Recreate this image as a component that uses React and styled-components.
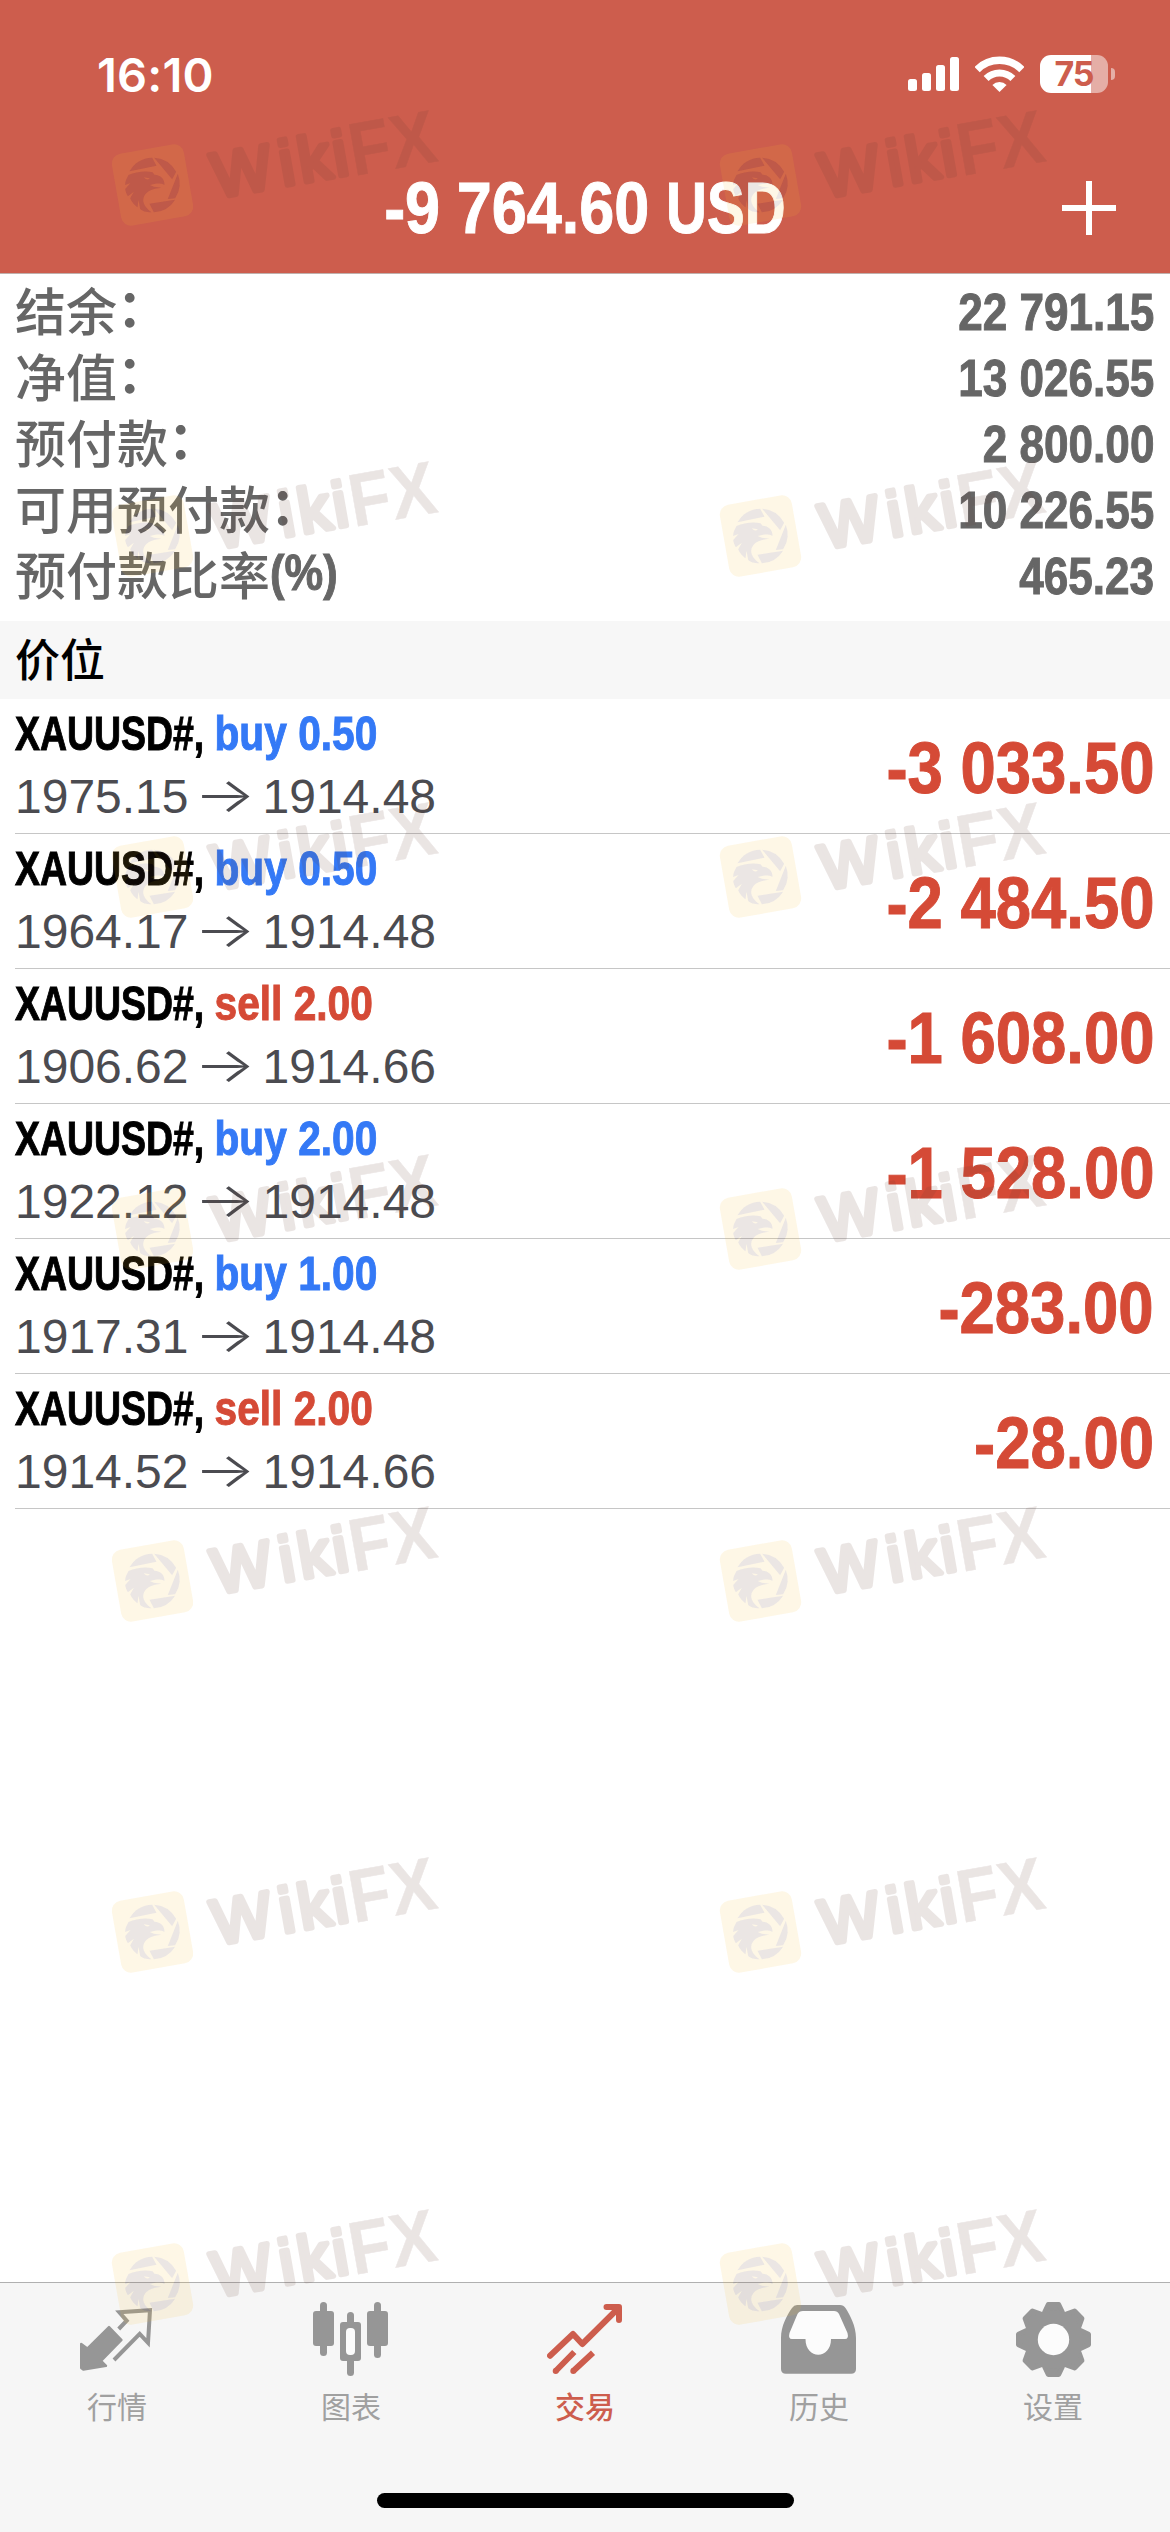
// @desc      Trade Screen (open positions)
// @route     Trade tab

import React from 'react'
import styled, { createGlobalStyle, css } from 'styled-components'

const RED = '#cd5d4d'
const LOSS = '#d54a36'
const BLUE = '#3479f6'
const GREY = '#969696'

const GlobalStyle = createGlobalStyle`
    body{
        margin: 0;
        background-color: #fff;
    }
    *{
        box-sizing: border-box;
    }
`

// condensed look for the bold latin text
const condensed = css`
    font-family: "Liberation Sans", Arial, sans-serif;
    font-weight: 700;
    white-space: pre;
    display: inline-block;
    transform: scaleX(${props => props.$ratio});
    transform-origin: ${props => props.$origin || 'left'} center;
    -webkit-text-stroke: 1px currentColor;
`

const Screen = styled.div`
    position: relative;
    width: 1170px;
    height: 2532px;
    overflow: hidden;
    display: flex;
    flex-direction: column;
    background-color: #fff;
    font-family: "Liberation Sans", "Noto Sans CJK SC", sans-serif;
`

const Header = styled.header`
    height: 274px;
    background-color: ${RED};
    border-bottom: 1px solid #c0b0ac;
    color: #fff;
`

const StatusBar = styled.div`
    height: 148px;
    padding: 0 55px 0 97px;
    display: flex;
    align-items: center;
    justify-content: space-between;
`

const Time = styled.span`
    font-family: Inter, sans-serif;
    font-size: 47px;
    font-weight: 600;
    letter-spacing: 0.2px;
`

const StatusIcons = styled.div`
    display: flex;
    align-items: center;
    gap: 16px;
`

const Battery = styled.div`
    display: flex;
    align-items: center;
    gap: 3px;
`

const BatteryBody = styled.div`
    width: 68px;
    height: 38px;
    border-radius: 11px;
    background: linear-gradient(to right, #fff 75%, #e5aea6 75%);
    color: ${RED};
    font: 700 34px/38px Inter, sans-serif;
    letter-spacing: -1px;
    text-align: center;
`

const BatteryTip = styled.div`
    width: 4px;
    height: 12px;
    border-radius: 0 6px 6px 0;
    background-color: #e5aea6;
`

const NavBar = styled.div`
    height: 120px;
    padding: 0 54px;
    display: grid;
    grid-template-columns: 54px 1fr 54px;
    align-items: center;
    justify-items: center;
`

const Title = styled.h1`
    ${condensed}
    margin: 0;
    font-size: 73px;
    line-height: 84px;
    word-spacing: -1px;
`

const Currency = styled.span`
    display: inline-block;
    margin-right: -15px;
    transform: scaleX(0.9);
    transform-origin: left center;
`

const Summary = styled.section`
    height: 347px;
    padding: 5px 16px 0 15px;
`

const SummaryRow = styled.div`
    height: 66px;
    display: flex;
    align-items: center;
    justify-content: space-between;
    color: #666;
`

const Label = styled.span`
    font-family: "Noto Sans CJK SC", sans-serif;
    font-size: 51px;
    font-weight: 500;
    line-height: 60px;
    margin-top: -6px;
    display: flex;
`

const Colon = styled.span`
    margin-top: -4px;
    font-weight: 700;
`

const Percent = styled.span`
    ${condensed}
    font-size: 50px;
`

const Value = styled.span`
    ${condensed}
    font-size: 52px;
`

const SectionTitle = styled.h2`
    height: 78px;
    margin: 0;
    padding: 0 15px 5px;
    background-color: #f7f7f7;
    color: #000;
    font: 500 45px/73px "Noto Sans CJK SC", sans-serif;
`

const Positions = styled.ul`
    flex: 1;
    margin: 0;
    padding: 0 0 0 15px;
    list-style: none;
`

const Position = styled.li`
    height: 135px;
    padding: 3px 16px 0 0;
    border-bottom: 1px solid #c6c6c6;
    display: flex;
    align-items: center;
    justify-content: space-between;
`

const Info = styled.div`
    margin-top: -6px;
    display: flex;
    flex-direction: column;
    gap: 6px;
`

const Deal = styled.div`
    ${condensed}
    font-size: 49px;
    line-height: 58px;
    color: #000;
`

const Symbol = styled.span`
    display: inline-block;
    margin-right: -21px;
    transform: scaleX(0.92);
    transform-origin: left center;
`

const Side = styled.span`
    color: ${props => props.$side === 'buy' ? BLUE : LOSS};
`

const Prices = styled.div`
    display: flex;
    gap: 13px;
    font-size: 48px;
    line-height: 58px;
    color: #4b4b50;
`

const Arrow = styled.span`
    width: 48px;
    display: flex;
    justify-content: center;
    font-family: Inter, sans-serif;
    font-weight: 300;
    transform: translate(-1px, -2px) scaleX(1.35);
`

const Profit = styled.span`
    ${condensed}
    font-size: 73px;
    line-height: 84px;
    color: ${LOSS};
`

const TabBar = styled.nav`
    height: 250px;
    border-top: 1px solid #b0b0b0;
    background-color: #f6f6f6;
    display: flex;
    flex-direction: column;
    align-items: center;
    justify-content: space-between;
`

const Tabs = styled.div`
    width: 100%;
    display: grid;
    grid-template-columns: repeat(5, 1fr);
`

const Tab = styled.div`
    padding-top: 18px;
    display: flex;
    flex-direction: column;
    align-items: center;
    color: ${props => props.$active ? RED : GREY};
`

const TabLabel = styled.span`
    margin-top: 6px;
    font-family: "Noto Sans CJK SC", sans-serif;
    font-size: 30px;
    font-weight: ${props => props.$active ? 500 : 400};
    line-height: 44px;
    color: ${props => props.$active ? RED : '#a0a0a0'};
`

const HomeIndicator = styled.div`
    width: 417px;
    height: 15px;
    margin-bottom: 24px;
    border-radius: 8px;
    background-color: #000;
`

const WatermarkLayer = styled.svg`
    position: absolute;
    top: 0;
    left: 0;
    pointer-events: none;
`

const summary = [
    { label: '结余', suffix: '：', value: '22 791.15' },
    { label: '净值', suffix: '：', value: '13 026.55' },
    { label: '预付款', suffix: '：', value: '2 800.00' },
    { label: '可用预付款', suffix: '：', value: '10 226.55' },
    { label: '预付款比率', suffix: '(%)', value: '465.23' },
]

const positions = [
    { side: 'buy', volume: '0.50', open: '1975.15', current: '1914.48', profit: '-3 033.50' },
    { side: 'buy', volume: '0.50', open: '1964.17', current: '1914.48', profit: '-2 484.50' },
    { side: 'sell', volume: '2.00', open: '1906.62', current: '1914.66', profit: '-1 608.00' },
    { side: 'buy', volume: '2.00', open: '1922.12', current: '1914.48', profit: '-1 528.00' },
    { side: 'buy', volume: '1.00', open: '1917.31', current: '1914.48', profit: '-283.00' },
    { side: 'sell', volume: '2.00', open: '1914.52', current: '1914.66', profit: '-28.00' },
]

const SignalIcon = () => (
    <svg width="51" height="34" viewBox="0 0 51 34" fill="#fff">
        <rect x="0" y="22" width="9" height="12" rx="2.5" />
        <rect x="14" y="16" width="9" height="18" rx="2.5" />
        <rect x="28" y="8" width="9" height="26" rx="2.5" />
        <rect x="42" y="0" width="9" height="34" rx="2.5" />
    </svg>
)

const WifiIcon = () => (
    <svg width="49" height="37" viewBox="0 0 49 37" fill="none" stroke="#fff">
        <path d="M2.1 13.6A31.7 31.7 0 0 1 46.9 13.6" strokeWidth="7.5" />
        <path d="M11.1 22.6A19 19 0 0 1 37.9 22.6" strokeWidth="7" />
        <path d="M24.5 36L17.4 28.9A10 10 0 0 1 31.6 28.9Z" fill="#fff" stroke="none" />
    </svg>
)

const PlusIcon = () => (
    <svg width="54" height="54" viewBox="0 0 54 54" fill="#fff">
        <path d="M24 0h6v24h24v6H30v24h-6V30H0v-6h24z" />
    </svg>
)

const QuotesIcon = () => (
    <svg width="76" height="76" viewBox="0 0 76 76">
        <path d="M30 26L42.5 39L22 59.8L27 64.8L4.3 68.5L2.2 67V43L8.3 47.5Z" fill={GREY} stroke={GREY} strokeWidth="2.4" strokeLinejoin="round" />
        <path d="M39.7 28L47.7 19.7L40.3 11.3L71 9.2L69 41.8L60.7 32.9L35 59" fill="none" stroke={GREY} strokeWidth="4" />
    </svg>
)

const ChartsIcon = () => (
    <svg width="76" height="76" viewBox="0 0 76 76" fill={GREY}>
        <rect x="7" y="1" width="7" height="54" rx="3.5" />
        <rect x="0" y="10" width="21" height="35" rx="3" />
        <rect x="34" y="11" width="7" height="64" rx="3.5" />
        <rect x="27" y="21" width="21" height="39" rx="3" />
        <rect x="33" y="27" width="9" height="27" rx="4" fill="#fcfcfc" />
        <rect x="61" y="1" width="7" height="56" rx="3.5" />
        <rect x="54" y="10" width="21" height="35" rx="3" />
    </svg>
)

const TradeIcon = () => (
    <svg width="76" height="76" viewBox="0 0 76 76" fill="none" stroke={RED} strokeWidth="6" strokeLinecap="round" strokeLinejoin="round">
        <path d="M3 54.7L26 33L35.3 43L71 7.5" />
        <path d="M59.5 6H72V19" />
        <path d="M66 6.5H71.5V12Z" fill={RED} strokeWidth="3" />
        <path d="M8.7 70L27.3 51M26.3 70L46 51.7" strokeLinecap="butt" />
        <path d="M8.7 70h0.01M26.3 70h0.01" />
    </svg>
)

const HistoryIcon = () => (
    <svg width="76" height="76" viewBox="0 0 76 76">
        <path d="M0 37C0 25 6 14 11 7Q13 4 16 4H59Q62.500 4 64.500 7C69 14 75 25 75 37V68Q75 72.700 70 72.700H5Q0 72.700 0 68Z" fill={GREY} />
        <path d="M22 10H53Q56.500 10 58 13L66.500 32Q68 38 64 38H50C50 59 24.500 59 24.500 38H11Q7 38 8.500 32L16.500 13Q18 10 22 10Z" fill="#fcfcfc" />
    </svg>
)

const teeth = [0, 45, 90, 135, 180, 225, 270, 315]

const SettingsIcon = () => (
    <svg width="76" height="76" viewBox="-38.500 -38.500 76 76">
        <g fill={GREY} stroke={GREY} strokeWidth="5" strokeLinejoin="round">
            {teeth.map(angle => (
                <path key={angle} d="M-9 -27L-5.200 -35H5.200L9 -27L0 -18Z" transform={`rotate(${angle})`} />
            ))}
        </g>
        <circle r="29.500" fill={GREY} />
        <circle r="15.700" fill="#fcfcfc" />
    </svg>
)

const tabs = [
    { label: '行情', icon: <QuotesIcon /> },
    { label: '图表', icon: <ChartsIcon /> },
    { label: '交易', icon: <TradeIcon />, active: true },
    { label: '历史', icon: <HistoryIcon /> },
    { label: '设置', icon: <SettingsIcon /> },
]

// shutter blades and the eagle head inside them
const EAGLE = [
    'M-69 -41A82 82 0 0 1 -1 -82L12 -58Z',
    'M5 -82A82 82 0 0 1 71 -40L59 -17Z',
    'M76 -34A82 82 0 0 1 68 40L46 42Z',
    'M-9 56L68 44A82 82 0 0 1 4 82Z',
    'M-72 -30C-50 -40 -20 -43 0 -38L6 -31C24 -30 37 -18 36 0C30 -4 20 -5 8 -4L-8 0L4 5L27 8C0 10 -27 20 -28 45C-28 60 -16 72 -3 82C-20 82 -30 78 -37 72L-42 44L-45 67C-56 60 -63 50 -67 40L-56 20L-74 34C-79 26 -81 18 -82 12L-66 -6L-82 0C-82 -8 -80 -14 -78 -18ZM-26 -23L-8 -20Q-16 -11 -26 -23Z',
]

const markRows = [111, 462, 803, 1155, 1507, 1858, 2210]
const markColumns = [152.5, 760.5]

const Watermark = () => (
    <WatermarkLayer width="1170" height="2532" viewBox="0 0 1170 2532">
        <defs>
            <g id="eagle" transform="scale(0.333)" fillRule="evenodd">
                {EAGLE.map(d => <path key={d} d={d} />)}
            </g>
            <mask id="badge" maskUnits="userSpaceOnUse" x="-50" y="-50" width="100" height="100">
                <rect x="-36.500" y="-36.500" width="73" height="73" rx="10" fill="#fff" transform="rotate(-10)" />
                <use href="#eagle" fill="#000" />
            </mask>
            <g id="mark">
                <rect x="-50" y="-50" width="100" height="100" fill="rgb(245,190,50)" fillOpacity="0.12" mask="url(#badge)" />
                <use href="#eagle" fill="rgb(100,60,50)" fillOpacity="0.13" />
                <g transform="rotate(-10)" fill="rgb(100,60,50)" opacity="0.13" fontFamily="Liberation Sans">
                    <text x="60.500 128.500 148 183" y="23.500" fontSize="63" stroke="rgb(100,60,50)" strokeWidth="5.500" strokeLinejoin="round">Wiki</text>
                    <text x="222 268.500" y="26" fontSize="75" fontWeight="700" transform="scale(0.9 1)" stroke="rgb(100,60,50)" strokeWidth="0.500">FX</text>
                </g>
            </g>
        </defs>
        {markRows.map(top => markColumns.map(left => (
            <use key={`${top}-${left}`} href="#mark" x={left} y={top + 74} />
        )))}
    </WatermarkLayer>
)

const App = () => {
    return (
        <Screen>
            <GlobalStyle />
            <Header>
                <StatusBar>
                    <Time>16:10</Time>
                    <StatusIcons>
                        <SignalIcon />
                        <WifiIcon />
                        <Battery>
                            <BatteryBody>75</BatteryBody>
                            <BatteryTip />
                        </Battery>
                    </StatusIcons>
                </StatusBar>
                <NavBar>
                    <span />
                    <Title $ratio={0.862} $origin="center">-9 764.60 <Currency>USD</Currency></Title>
                    <PlusIcon />
                </NavBar>
            </Header>

            <Summary>
                {summary.map(row => (
                    <SummaryRow key={row.label}>
                        <Label>
                            {row.label}
                            {row.suffix === '：'
                                ? <Colon>{row.suffix}</Colon>
                                : <Percent $ratio={0.87}>{row.suffix}</Percent>}
                        </Label>
                        <Value $ratio={0.848} $origin="right">{row.value}</Value>
                    </SummaryRow>
                ))}
            </Summary>

            <SectionTitle>价位</SectionTitle>
            <Positions>
                {positions.map(item => (
                    <Position key={item.open}>
                        <Info>
                            <Deal $ratio={0.83}>
                                <Symbol>XAUUSD#, </Symbol>
                                <Side $side={item.side}>{item.side} {item.volume}</Side>
                            </Deal>
                            <Prices>
                                <span>{item.open}</span>
                                <Arrow>→</Arrow>
                                <span>{item.current}</span>
                            </Prices>
                        </Info>
                        <Profit $ratio={0.869} $origin="right">{item.profit}</Profit>
                    </Position>
                ))}
            </Positions>

            <TabBar>
                <Tabs>
                    {tabs.map(tab => (
                        <Tab key={tab.label} $active={tab.active}>
                            {tab.icon}
                            <TabLabel $active={tab.active}>{tab.label}</TabLabel>
                        </Tab>
                    ))}
                </Tabs>
                <HomeIndicator />
            </TabBar>
            <Watermark />
        </Screen>
    )
}

export default App
